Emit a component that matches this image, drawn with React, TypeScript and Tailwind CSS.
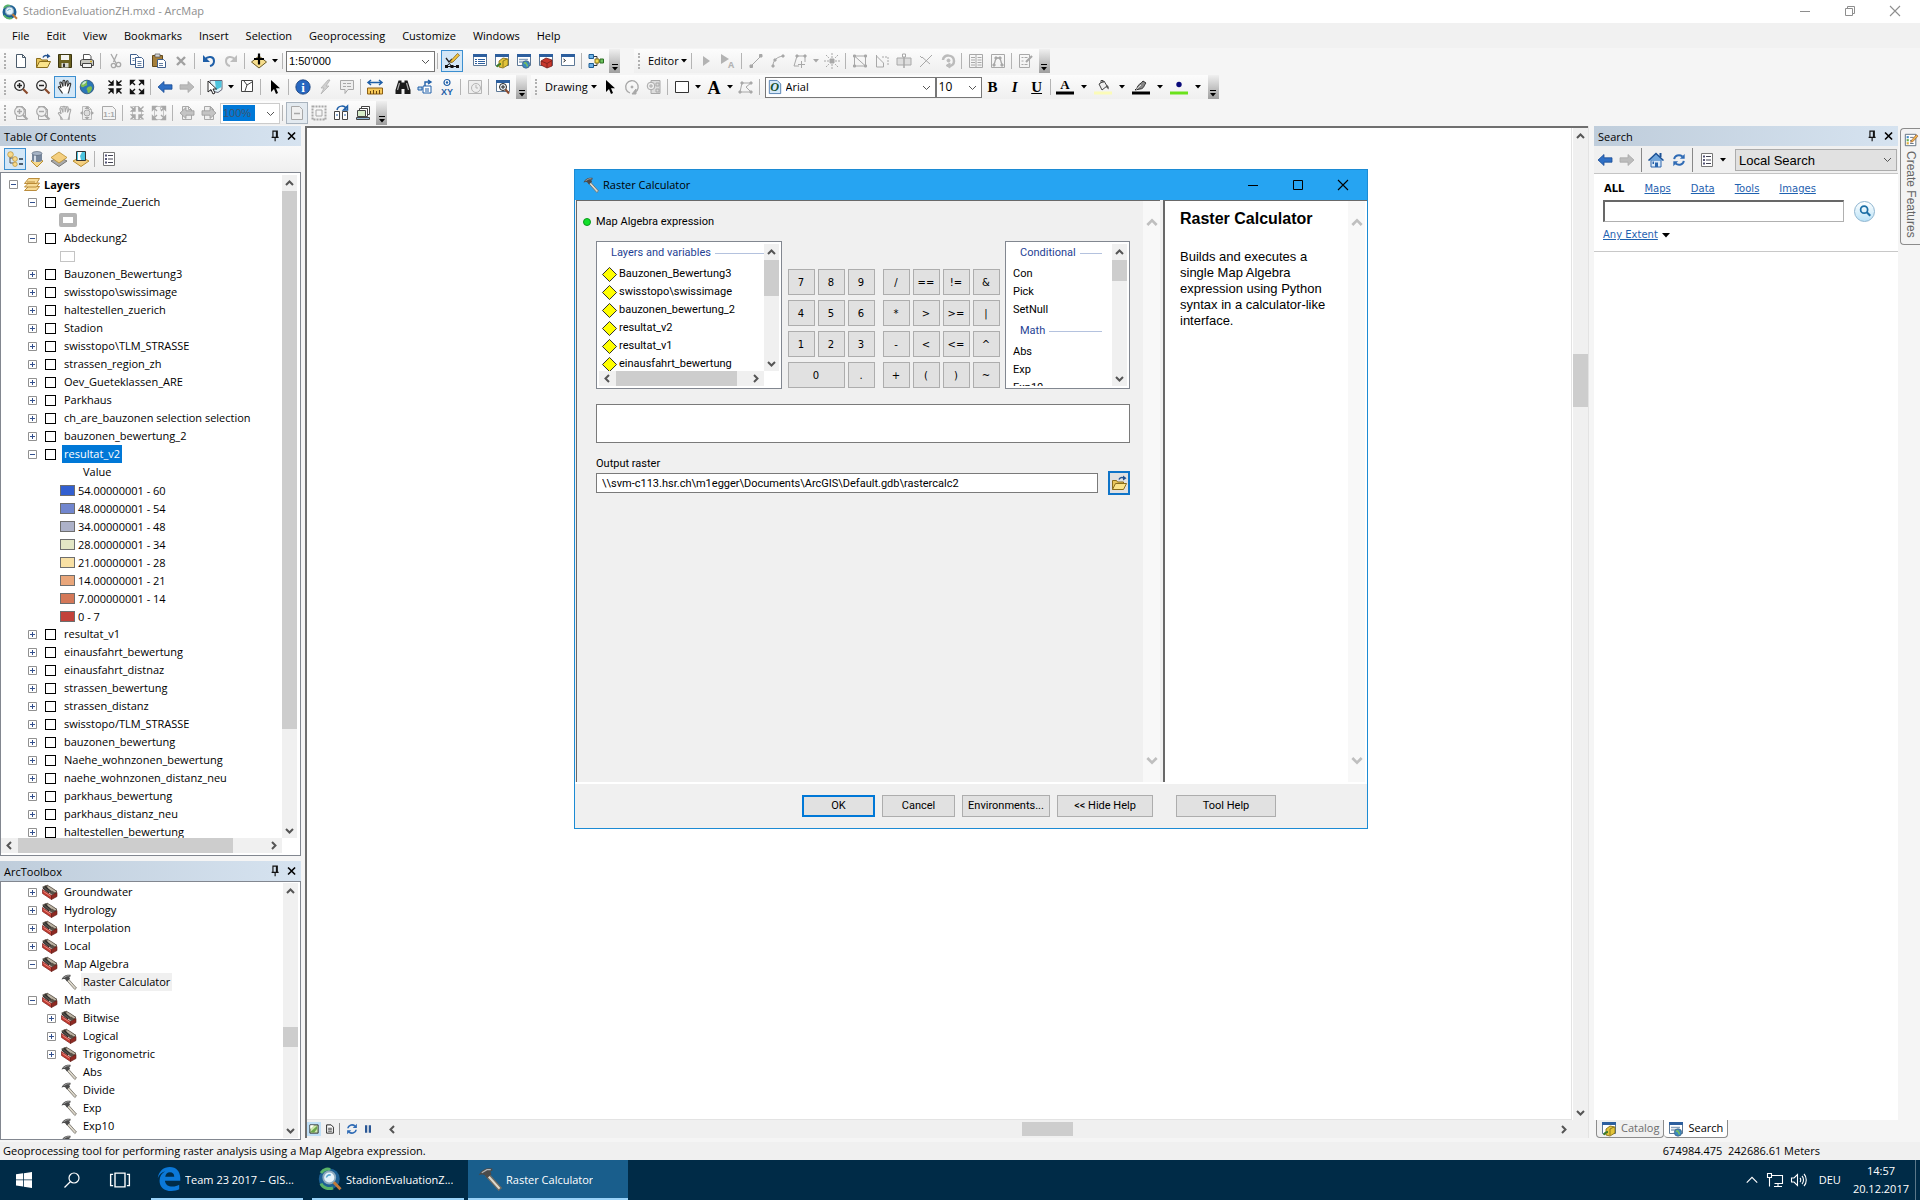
import { useState, type ReactNode } from "react";
import clsx from "clsx";

/* ---------- icons (16x16 grid) ---------- */

const G = "#a8a8a8";

const page = (c: string, f = "#fff") => <path d="M3.5 1.5h6l3 3v10h-9zM9.5 1.5v3h3" fill={f} stroke={c} />;
const corners = (out: boolean, c: string) => (
  <g stroke={c} fill={c} strokeWidth="1.4">
    {out ? (
      <path d="M6 6 3 3M10 6l3-3M6 10l-3 3M10 10l3 3M1.5 5V1.5H5zM14.500 5V1.500H11zM1.500 11v3.500H5zM14.500 11v3.500H11z" />
    ) : (
      <path d="M1.500 1.500l3 3M14.500 1.500l-3 3M1.500 14.500l3-3M14.500 14.500l-3-3M6 2.500V6H2.500zM10 2.500V6h3.500zM6 13.500V10H2.500zM10 13.500V10h3.500z" />
    )}
  </g>
);
const hand = (c: string, f: string) => (
  <path
    d="M5.500 14.500 C4.500 12.500 2.500 10.500 1.300 8.300 C1.500 7 3 7.300 4.200 9 L2.800 3.800 C3 2.600 4.200 2.800 4.600 3.800 L6 7.500 L6 2 C6.300 1 7.600 1 7.800 2 L8.200 7 L9.500 2.300 C10 1.400 11.200 1.800 11.100 2.800 L10.400 7.500 L12.300 4.500 C13 3.800 14 4.400 13.700 5.300 L12.500 9.500 C12.300 11.500 11.800 13 11 14.500"
    fill={f}
    stroke={c}
    strokeWidth="1.100"
  />
);
const lens = (sign: string, c: string, f: string, h: string) => (
  <g fill="none">
    <circle cx="6.500" cy="6.500" r="4.800" fill={f} stroke={c} strokeWidth="1.200" />
    <path d={sign} stroke={c} strokeWidth="1.500" />
    <path d="M10 10l4.500 4.500" stroke={h} strokeWidth="2.200" />
  </g>
);
const arrow = (left: boolean, c: string, f: string) => (
  <path d={left ? "M1 8l6-5.500v3.300h8v4.400H7v3.300z" : "M15 8L9 2.500v3.300H1v4.400h8v3.300z"} fill={f} stroke={c} strokeWidth=".8" />
);
const pointer = (c: string) => <path d="M4 1v12l3-3 2 5 2-1-2-4.800h4z" fill={c} />;
const win = (extra: ReactNode) => (
  <g>
    <path d="M1.500 1.500h13v11h-13z" fill="#fff" stroke="#5d7896" />
    <path d="M1 1h14v3H1z" fill="#2d5f9e" />
    {extra}
  </g>
);
const globe = (
  <g>
    <circle cx="8" cy="8" r="6.800" fill="#2a76b8" stroke="#2a4f76" strokeWidth=".8" />
    <path d="M3 4c2-2 4-2.500 5-2 1 1-1 2 0 3s-1 2-2 2-1 2-3 1-1.500-2 0-4zM9 8c2-1 4-1 4 1s-2 5-4 5c-1-1 0-2-1-3s0-2 1-3z" fill="#7fbf4f" />
    <path d="M4 3.500c2-2 4-1.500 3 0s-3 2.500-4 2z" fill="#d9f0ff" opacity=".8" />
  </g>
);
const arcmap = (
  <g>
    <circle cx="7.500" cy="8" r="7" fill="#1c5f93" />
    <path d="M2 4c2-3 5-3 6-2M2 11c1 3 5 4 8 3" stroke="#58b368" strokeWidth="2" fill="none" />
    <circle cx="7.500" cy="7" r="4" fill="#e4f3fb" stroke="#8ba9bd" strokeWidth="1.200" />
    <path d="M5.500 7c1-2 2-2 3-1.500" stroke="#5aa7d0" fill="none" />
    <path d="M10.500 10.200l4.500 4.600" stroke="#c27a3a" strokeWidth="2" />
  </g>
);
const hammer = (
  <g>
    <path d="M7 4.500l8.500 9.500-1.700 1.500L5.300 6z" fill="#ddd8cb" stroke="#6d6a62" strokeWidth=".8" />
    <path d="M.5 5.500C1.500 3 4 1.200 6.500.8h2.900l.3 1.500L8.300 3l.7 1.800L6 7.500 4.400 5.400C3 4.800 1.800 4.900.5 5.500z" fill="#4b4b4b" />
    <path d="M2.500 3.800l3.500-2h2.500" stroke="#b5b5b5" fill="none" strokeWidth=".8" />
  </g>
);
const toolset = (
  <g>
    <path d="M0 3l4-2 11 6-1 3-4 1z" fill="#5a5248" />
    <path d="M5 1l5 3 5 3.500-2 1.500-3-2-2 1-3-3z" fill="#bdb4a4" stroke="#4a4036" strokeWidth=".7" />
    <path d="M1 4l6 5M3 2.500l6 5" stroke="#2b2b2b" strokeWidth="1.100" />
    <path d="M.5 5.500l9 6v4l-9-6z" fill="#c33b30" stroke="#7a201b" strokeWidth=".7" />
    <path d="M9.500 11.500l5.500-3v4l-5.500 3z" fill="#8f2a23" stroke="#5c1713" strokeWidth=".6" />
    <path d="M1.500 7.500l7 4.600" stroke="#ef9c92" strokeWidth=".8" />
  </g>
);
const folder = (
  <g>
    <path d="M1.500 14.500v-9h4l1 1.500h6v2" fill="#e9c65b" stroke="#8a6d1c" />
    <path d="M1.500 14.500l3-6h11l-3 6z" fill="#fbe48b" stroke="#8a6d1c" />
    <path d="M8 4.500C9 2.500 11 2 12.500 3" stroke="#20508f" strokeWidth="1.500" fill="none" />
    <path d="M12 .5l3.500 2.700L12 5.500z" fill="#20508f" />
  </g>
);
const listOpts = (
  <g>
    <path d="M2.500 1.500h11v13h-11z" fill="#fff" stroke="#777" />
    <path d="M7 4.500h5M7 8h5M7 11.500h5" stroke="#445" strokeWidth="1.200" />
    <path d="M4 3.500h2v2H4zM4 7h2v2H4zM4 10.500h2v2H4z" fill="#557" />
  </g>
);
const pin = <path d="M3 9.500h8M4.500 9.500v-7h5v7M8.500 3v6M7 9.500V14" stroke="#111" strokeWidth="1.300" fill="none" />;
const cross = <path d="M3.500 4l8 8M11.500 4l-8 8" stroke="#000" strokeWidth="1.900" />;
const catalogWin = win(
  <g>
    <path d="M5 8l4-3 5 1v6l-5 3-4-1z" fill="#e2c43a" stroke="#7b6410" strokeWidth=".8" />
    <path d="M9 8l4-2M9 8v6" stroke="#7b6410" strokeWidth=".8" />
    <path d="M3 14c1-3 3-3 4-3" stroke="#3f7d2a" strokeWidth="2" fill="none" />
  </g>
);
const searchWin = win(
  <g>
    <path d="M3 6.500h9M3 9h5" stroke="#8aa2bd" strokeWidth="1.500" />
    <circle cx="10" cy="11.500" r="3.700" fill="#3b87bf" stroke="#40607c" strokeWidth=".7" />
    <path d="M8 10.500c1-1 2-1 2 0s2 1 1 3" stroke="#79c258" strokeWidth="1.500" fill="none" />
  </g>
);

const icons: Record<string, ReactNode> = {
  arcmap, globe, hammer, toolset, folder, pin, cross, listOpts, catalogWin, searchWin,
  new: page("#4a5a6a"),
  save: <g><path d="M1.500 1.500h13v13h-13z" fill="#6c6220" stroke="#3b3510" /><path d="M4 2h8v5H4z" fill="#f4f4f0" /><path d="M4.500 10h7v4.500h-7z" fill="#d9d9d0" /><path d="M6 10.500h2v3.500H6z" fill="#333" /></g>,
  print: <g><path d="M4.500 7V1.500h6l1.500 2V7" fill="#fff" stroke="#555" /><path d="M1.500 7.500l2-1h9l2 1v5h-13z" fill="#c9c9c2" stroke="#444" /><path d="M3.500 10.500h9v4h-9z" fill="#f4f4f4" stroke="#444" /><path d="M11 8.500h2" stroke="#caa72b" strokeWidth="1.500" /></g>,
  cut: <g fill="none" stroke={G} strokeWidth="1.300"><path d="M4 1l5 9M10 1L6.500 9" /><circle cx="11.500" cy="11.500" r="2.200" /><circle cx="6.500" cy="12.500" r="2.200" /></g>,
  copy: <g fill="#fff" stroke="#3f5f8c"><path d="M1.500 1.500h6l2 2v8h-8z" /><path d="M6.500 4.500h6l2 2v8h-8z" /><path d="M8.500 8.500h4M8.500 10.500h4M8.500 12.500h4M3.500 5.500h2M3.500 7.500h2" strokeWidth=".8" /></g>,
  paste: <g><path d="M1.500 2.500h10v11h-10z" fill="#a57f3a" stroke="#634a1c" /><path d="M4 1h5v3H4z" fill="#d8d8d8" stroke="#555" strokeWidth=".7" /><path d="M6.500 6.500h6l2 2v6h-8z" fill="#fff" stroke="#3f5f8c" /><path d="M8 10.500h4M8 12.500h4" stroke="#3f5f8c" strokeWidth=".8" /></g>,
  del: <path d="M4 4l8 8M12 4l-8 8" stroke="#a0a0a0" strokeWidth="2.400" />,
  undo: <g><path d="M4 6.500c3-4 9-3 9 1.500 0 3-2 4.500-4 5" fill="none" stroke="#1f5fa8" strokeWidth="2" /><path d="M2 2v7h7z" fill="#1f5fa8" /></g>,
  redo: <g><path d="M12 6.500C9 2.500 3 3.500 3 8c0 3 2 4.500 4 5" fill="none" stroke="#bdbdbd" strokeWidth="2" /><path d="M14 2v7H7z" fill="#bdbdbd" /></g>,
  addData: <g><path d="M8 3l7.500 6L8 15 .5 9z" fill="#f6dd8c" stroke="#6b5a22" /><path d="M8 .500v11M3 6h10" stroke="#000" strokeWidth="2.200" /></g>,
  editSketch: <g><path d="M2 5l3 4 3-3" stroke="#222" fill="none" strokeWidth="1.300" /><path d="M7 7.500L13.500 .500l2 1.700L9 9l-2.500.800z" fill="#f5c63d" stroke="#6d5010" strokeWidth=".7" /><path d="M2.500 13.500h11M2.500 13l3-2.500 2 3" stroke="#111" fill="none" /><path d="M1 12h3v3H1zM6.500 12h3v3h-3zM12 12h3v3h-3z" fill="#111" /></g>,
  tocWin: win(<path d="M3 6.500h2M6 6.500h7M3 8.500h2M6 8.500h7M3 10.500h2M6 10.500h7" stroke="#2d5f9e" strokeWidth="1.200" />),
  toolboxWin: win(<g><path d="M3 8l5-3 6 2v6l-5 2-6-3z" fill="#c8372c" stroke="#73201a" strokeWidth=".8" /><path d="M3 8l6 2.500V15M9 10.500l5-3" stroke="#73201a" fill="none" strokeWidth=".8" /></g>),
  pyWin: win(<path d="M3.500 6l2 1.500-2 1.500" stroke="#222" fill="none" />),
  model: <g><path d="M4 3.500h5v9H4M9 8h3" stroke="#333" fill="none" /><path d="M1 1.500h4.500v4H1zM1 10.500h4.500v4H1z" fill="#6fb2e6" stroke="#1d5d93" /><path d="M7 6h4v4H7z" fill="#f4dd57" stroke="#8a7414" /><path d="M12 6h3.500v4H12z" fill="#6cc25e" stroke="#2c6e23" /></g>,
  edArrow: <path d="M5 3v10l7-5z" fill="#b3b3b3" />,
  edArrowA: <g fill="#b3b3b3"><path d="M1 1v10l8-5z" /><text x="8" y="15" fontSize="9" fontWeight="bold">A</text></g>,
  edLine: <g stroke={G} fill={G}><path d="M3 13L13 3" /><path d="M2 12h2.500v2.500H2zM11.500 1.500H14V4h-2.500z" /></g>,
  edArc: <g stroke={G} fill="none"><path d="M3 13c0-6 4-9 10-10" /><path d="M2 12h2v2H2zM4 6h2v2H4zM12 2h2v2h-2z" fill={G} /></g>,
  edTrace: <g stroke={G} fill="none"><path d="M2 13L5 3h8v6M2 13h5M9.500 8v7M6 11.500h7" /><path d="M4 2h2v2H4zM12 2h2v2h-2z" fill={G} /></g>,
  edPoint: <g stroke={G} fill="none"><path d="M8 0v5M8 11v5M0 8h5M11 8h5M2 2l3 3M14 2l-3 3M2 14l3-3M14 14l-3-3" strokeDasharray="2 1" /><path d="M6 6h4v4H6z" fill={G} /></g>,
  edVert: <g stroke={G} fill="none"><path d="M2.500 3h11v10h-11zM2.500 3l11 10" /><path d="M1.500 2h2v2h-2zM12.500 2h2v2h-2zM12.500 12h2v2h-2zM1.500 12h2v2h-2z" fill={G} /></g>,
  edReshape: <g stroke={G} fill="none"><path d="M2.500 2v12M2.500 3l7 7v4h-7" /><path d="M8 4h6v9" strokeDasharray="2 1" /></g>,
  edCut: <g stroke={G} fill="none"><path d="M1 5h14v7H1z" fill="#dedede" /><path d="M8 1v14" strokeWidth="1.500" /><path d="M6.500 1h3v3h-3z" fill="#fff" /></g>,
  edSplit: <g stroke={G} fill="none"><path d="M2 14L14 2M4 4l8 7" /><path d="M2 3l2 2" /></g>,
  edRotate: <g stroke="#bbb" fill="none"><path d="M3 7c0-6 11-6 11 1 0 3-2 5-5 5" strokeWidth="2.500" /><circle cx="8.500" cy="7.500" r="1.500" fill="#bbb" /><path d="M10 10v5l-4-2.500z" fill="#bbb" /></g>,
  edTable: <g stroke={G} fill="none"><path d="M1.500 1.500h13v13h-13zM8 2v12M3 4.500h4M3 7h4M3 9.500h4M3 12h4M9.500 4.500h4M9.500 7h4M9.500 9.500h4M9.500 12h4" /></g>,
  edSketchProp: <g stroke={G} fill="none"><path d="M1.500 1.500h13v13h-13z" /><path d="M4 12l2-7h4l2 7" strokeWidth="1.300" /><path d="M3 11h2v2H3zM5 4h2v2H5zM9 4h2v2H9zM11 11h2v2h-2z" fill={G} /></g>,
  edCreate: <g stroke={G} fill="none"><path d="M1.500 1.500h10v13h-10zM3.500 4.500h2M3.500 8h2M3.500 11.500h2M6.500 4.500h3M6.500 11.500h3" /><path d="M8 9l6-6" strokeWidth="2.200" /></g>,
  zoomIn: lens("M4 6.500h5M6.500 4v5", "#222", "#f4f4f4", "#8a4a2c"),
  zoomOut: lens("M4 6.500h5", "#222", "#f4f4f4", "#8a4a2c"),
  pan: hand("#333", "#fff"),
  fixedIn: corners(false, "#111"),
  fixedOut: corners(true, "#111"),
  back: arrow(true, "#1b4d96", "#2f6fc4"),
  fwd: arrow(false, "#a8a8a8", "#bcbcbc"),
  selectFeat: <g><path d="M3 1.500h12v9l-4 3-8-2z" fill="#dff3fa" stroke="#667" /><path d="M8 2h6.500v6L9 11z" fill="#4cc3dd" /><path d="M1 2v11l3-2.500L6 15l2-1-2-4h3.500z" fill="#fff" stroke="#111" strokeWidth=".9" /></g>,
  clearSel: <g fill="#fff" stroke="#444"><path d="M2.500 1.500h11v11h-11z" /><path d="M5 2l3 4 5-3M8 6l-2 6" fill="none" /></g>,
  pointer: pointer("#000"),
  info: <g><circle cx="8" cy="8" r="7.200" fill="#2767c0" stroke="#143c78" strokeWidth=".8" /><text x="8" y="12.500" fontSize="13" fontWeight="bold" fontFamily="Liberation Serif, serif" fill="#fff" textAnchor="middle">i</text></g>,
  bolt: <path d="M11 1L4 9h3l-3 6 8-8H9l4-6z" fill="#d0d0d0" stroke="#b3b3b3" strokeWidth=".8" />,
  popup: <g fill="#eee" stroke={G}><path d="M1.500 1.500h13v9H9l-3 4v-4H1.500z" /><path d="M4 4.500h3M8 4.500h4M4 7.500h3M8 7.500h4" /></g>,
  measure: <g><path d="M1 3.500h14M4 1L1 3.500 4 6M12 1l3 2.500L12 6" stroke="#1f5fa8" strokeWidth="1.500" fill="none" /><path d="M.500 9h15v6h-15z" fill="#f7c95a" stroke="#8c5f14" /><path d="M3.500 12v3M6.500 11v4M9.500 12v3M12.500 11v4" stroke="#6b460c" /></g>,
  binoc: <g><path d="M3.500 1.500h3v2h3v-2h3L15.500 11v4h-6v-5h-3v5h-6v-4z" fill="#1a1a1a" /><path d="M4.500 4L2.500 11M11.500 4l2 7" stroke="#aaa" strokeWidth="1.200" /></g>,
  route: <g stroke="#1f5fa8" fill="none"><path d="M8 9V3h5M11 1l3 2-3 2" strokeWidth="1.400" /><path d="M6 7h8v7H6z" fill="#fff" /><path d="M1 8h4v3H1z" fill="#bcd7ee" /><path d="M8 10h4M8 12h4" /></g>,
  xy: <g fill="#1f5fa8"><circle cx="8" cy="3.500" r="3" fill="#fff" stroke="#1f5fa8" strokeWidth="1.200" /><circle cx="8" cy="3.500" r="1.200" /><text x="8" y="15.500" fontSize="9" fontWeight="bold" fontFamily="Liberation Sans, sans-serif" textAnchor="middle">XY</text></g>,
  time: <g stroke="#b5b5b5" fill="#eee"><path d="M1.500 1.500h13v13h-13z" /><circle cx="9" cy="9" r="4.500" /><path d="M9 6v3h2" fill="none" /></g>,
  viewer: win(<g><circle cx="8" cy="8" r="3.500" fill="#eef4fa" stroke="#222" /><path d="M6 8h4M8 6v4" stroke="#222" /><path d="M10.500 10.500L14 14.500" stroke="#8a4a2c" strokeWidth="2" /></g>),
  rotGray: <g stroke={G} fill="none"><path d="M6 14A6.300 6.300 0 1 1 11 13.500" strokeWidth="1.300" /><circle cx="8" cy="8" r="1" fill={G} /><path d="M12 10v5H8z" fill={G} /></g>,
  zoomSel: <g stroke={G} fill="#ddd"><path d="M5 1.500h9v13H5z" /><circle cx="5" cy="7" r="3.800" fill="#eee" /><path d="M3 7h4M5 5v4M10 4h3v3h-3zM10 10h3v3h-3z" /></g>,
  rect: <path d="M1.500 2.500h13v11h-13z" fill="#fff" stroke="#333" />,
  bigA: <text x="8" y="14.500" fontSize="18" fontWeight="bold" fontFamily="Liberation Serif, serif" textAnchor="middle">A</text>,
  editVert: <g stroke={G} fill="none"><path d="M2 13l2-9h9L8 8l5 5z" /><path d="M1 12h2v2H1zM3 3h2v2H3zM12 3h2v2h-2zM12 12h2v2h-2z" fill={G} /></g>,
  fontA: <g><text x="8" y="10" fontSize="13" fontWeight="bold" fontFamily="Liberation Serif, serif" textAnchor="middle">A</text><path d="M-1 12.500h18v3H-1z" /></g>,
  fill: <g><path d="M4 5l5-3 3 5-5 4z" fill="#eee" stroke="#444" /><path d="M6 4V1.500h2V4" stroke="#444" fill="none" /><path d="M12 6c2 1 2 3 1.500 4.500L11 8z" fill="#555" /><path d="M-1 12.500h18v3H-1z" fill="#fbfbb8" /></g>,
  line: <g><path d="M4 9c1-4 4-4 6-7l3 2c-2 2-2 6-6 6l-5 1z" fill="#888" stroke="#222" strokeWidth=".9" /><path d="M3 10.500L8 6" stroke="#fff" strokeWidth=".8" /><path d="M-1 12.500h18v3H-1z" /></g>,
  marker: <g><circle cx="8" cy="5.500" r="2.700" fill="#0a0a7a" /><path d="M-1 12.500h18v3H-1z" fill="#6be21c" /></g>,
  pgIn: <g>{page(G, "#f4f4f4")}{lens("M4 6.500h5M6.500 4v5", G, "#f0f0f0", G)}</g>,
  pgOut: <g>{page(G, "#f4f4f4")}{lens("M4 6.500h5", G, "#f0f0f0", G)}</g>,
  pgPan: <g>{page("#bbb", "#f4f4f4")}{hand(G, "#f4f4f4")}</g>,
  pgFull: <g>{page("#bbb", "#eee")}<path d="M8 1l2.500 3h-5zM8 15l2.500-3h-5zM1 8l3-2.500v5zM15 8l-3-2.500v5z" fill={G} /><circle cx="8" cy="8" r="3" fill="#ddd" stroke={G} /></g>,
  pgOne: <g><path d="M1.500 1.500h10l3 3v10h-13z" fill="#f4f4f4" stroke={G} /><text x="8" y="12" fontSize="8" fontWeight="bold" fill={G} textAnchor="middle" fontFamily="Liberation Sans, sans-serif">1:1</text></g>,
  pgFixIn: <g>{page("#c4c4c4", "#f4f4f4")}{corners(false, G)}</g>,
  pgFixOut: <g>{page("#c4c4c4", "#f4f4f4")}{corners(true, G)}</g>,
  pgBack: <g>{page(G, "#eee")}{arrow(true, "#999", "#c4c4c4")}</g>,
  pgFwd: <g>{page(G, "#eee")}{arrow(false, "#999", "#c4c4c4")}</g>,
  draft: <g><path d="M2.500 1.500h8l3 3v10h-11z" fill="#f0f0f0" stroke={G} /><path d="M5 8.500h6" stroke={G} strokeWidth="1.500" /></g>,
  focus: <g fill="none" stroke={G}><path d="M1.500 1.500h13v13h-13z" strokeDasharray="2 1" strokeWidth="2" /><path d="M5 5h6v6H5z" /></g>,
  layoutSwap: <g><path d="M1.500 6.500h5v8h-5zM9.500 6.500h5v8h-5z" fill="#fff" stroke="#444" /><path d="M4 5c1-5 8-5 9-1M14.500 1v4h-4z" fill="none" stroke="#1f5fa8" strokeWidth="1.500" /><path d="M3 10h2M11 10h2" stroke="#1f5fa8" /></g>,
  dataDriven: <g fill="#fff" stroke="#444"><path d="M6.500 1.500h8v8h-8z" /><path d="M4.500 3.500h8v8h-8z" /><path d="M2.500 5.500h8v6h-8z" fill="#d6ecc8" /><path d="M1.500 12.500h13v2h-13z" fill="#8fb7d8" /></g>,
  byDrawing: <g><path d="M3 4v8h5M3 7h5" stroke="#555" fill="none" /><circle cx="3.500" cy="3.500" r="2.800" fill="#f7d88a" stroke="#b98f30" strokeWidth=".7" /><circle cx="8" cy="8" r="2.400" fill="#f7d88a" stroke="#b98f30" strokeWidth=".7" /><circle cx="8" cy="13.300" r="2.200" fill="#f7d88a" stroke="#b98f30" strokeWidth=".7" /><path d="M12 8h4M12 13h4" stroke="#234" strokeWidth="1.500" /></g>,
  bySource: <g><path d="M2 10l6-3 6 3-6 6z" fill="#f7d88a" stroke="#b98f30" /><path d="M3 2.500v7c1 2 9 2 10 0v-7z" fill="#76869c" /><path d="M5 3v8h2V3z" fill="#d5dde8" /><ellipse cx="8" cy="2.500" rx="5" ry="2" fill="#a7b4c6" stroke="#4c5a6d" strokeWidth=".6" /></g>,
  byVis: <g><path d="M0 10l8-4 8 4-8 5.500z" fill="#aaa" stroke="#777" /><path d="M0 6.500L8 1l8 5.500L8 12z" fill="#f4cf80" stroke="#b98f30" strokeWidth=".8" /></g>,
  bySel: <g><path d="M0 10l8-4 8 4-8 5.500z" fill="#f4cf80" stroke="#b98f30" /><path d="M3.500.500h9v9h-9z" fill="#4cc3dd" stroke="#333" /><path d="M5 1h4L7 5l1 4H5z" fill="#fff" /></g>,
  layers: <g fill="#f8dc98" stroke="#b3822c" strokeWidth=".9"><path d="M.500 14.500l4-4h11l-3 4z" /><path d="M.500 11l4-4h11l-3 4z" /><path d="M.500 7.500l4-5h11l-3 5z" /><path d="M3 6h8" /></g>,
  home: <g><path d="M3 8h10v7H3z" fill="#dbe9f7" stroke="#2a65ad" /><path d="M.500 8.500L8 1.500l7.500 7" fill="#6ea5dc" stroke="#1d5296" strokeWidth="1.500" /><path d="M11.500 1h2v4h-2z" fill="#1d5296" /><path d="M7 10.500h3V15H7zM4.500 9.500h1.500V12H4.500z" fill="#2a65ad" /></g>,
  refresh: <g fill="none" stroke="#2f6bb5" strokeWidth="2.200"><path d="M2.500 7C3 3 8 1 12 4M13.500 9C13 13 8 15 4 12" /><path d="M14.500 1v5.500H9zM1.500 15V9.500H7z" fill="#2f6bb5" stroke="none" /></g>,
  mapView: <g><path d="M2.500 2.500h11v11h-11z" fill="#cfe8b0" stroke="#222" strokeWidth="1.200" /><path d="M3 12L12 4v4l-4 5z" fill="#6aa54b" /><path d="M3 3h5L3 8z" fill="#fff" /></g>,
  layoutView: <g fill="#fff" stroke="#222" strokeWidth="1.300"><path d="M3.500 2.500h6l3 3v8h-9z" /><path d="M5.500 7h5M5.500 9h5M5.500 11h5" strokeWidth="1" /></g>,
  pause: <path d="M4 3h3v10H4zM9 3h3v10H9z" fill="#2a5795" />,
  create: <g><path d="M1.500 1.500h12v13h-12z" fill="#fff" stroke="#567" /><path d="M3 3.500h2.500V6H3z" fill="#4a90c8" /><path d="M3 7h2.500v2.500H3z" fill="#6ab04c" /><path d="M3 10.500h2.500V13H3z" fill="#e0b040" /><path d="M7 5h4M7 8.500h4M7 12h4" stroke="#567" /><path d="M8 9l6-7 2 1.500-6 6.500-2.500.500z" fill="#f3b94a" stroke="#8a4a2c" strokeWidth=".7" /></g>,
  min: <path d="M3 8.500h10" stroke="currentColor" />,
  max: <path d="M3.500 3.500h9v9h-9z" fill="none" stroke="currentColor" />,
  restore: <path d="M3.500 5.500h7v7h-7zM5.500 5V3.500h7v7H11" fill="none" stroke="currentColor" />,
  close: <path d="M3 3l10 10M13 3L3 13" fill="none" stroke="currentColor" strokeWidth="1.100" />,
  windows: <path d="M0 2.300l7-1v6.200H0zM7.800 1.200L16 0v7.500H7.800zM0 8.300h7v6.200l-7-1zM7.800 8.300H16V16l-8.200-1.200z" fill="#fff" />,
  find: <g fill="none" stroke="#fff" strokeWidth="1.200"><circle cx="10" cy="6" r="5" /><path d="M6.500 9.500L.500 15.500" /></g>,
  taskview: <path d="M4 2.500h8v11H4zM2.500 3.500h-2v9h2M13.500 3.500h2v9h-2" fill="none" stroke="#fff" strokeWidth="1.100" />,
  edge: <path d="M.500 7.500C1.300 2.500 4.500 0 8.500 0c4.500 0 7 3.300 7 7.200v1.900H5.300c.2 2.600 2.200 3.900 5 3.900 1.800 0 3.200-.4 4.500-1.200v3.100c-1.400.8-3.200 1.100-5.200 1.100-5 0-7.900-2.800-7.900-6.900 0-2.700 1.400-5 3.800-6.200C3 3.700 1.500 5.200.500 7.500zm5-1h6c0-1.900-1-3-2.900-3-1.800 0-2.900 1.200-3.100 3z" fill="#0b78d8" fillRule="evenodd" />,
  net: <g fill="none" stroke="#fff" strokeWidth="1.100"><path d="M4.500 3.500h11v8h-8M11 11.500v3M7 14.500h8" /><path d="M.500 1.500h4v4h-4zM2.500 5.500v9" /></g>,
  sound: <g fill="none" stroke="#fff" strokeWidth="1.100"><path d="M.500 6h2.500l3.500-3.500v11L3 10H.500z" /><path d="M9 6c1 1 1 3 0 4M11 4c2 2 2 6 0 8M13 2c3 3 3 9 0 12" /></g>,
  tray: <path d="M2 11l6-6 6 6" fill="none" stroke="#fff" strokeWidth="1.300" />,
  magnify: <g fill="none" stroke="#1b6ea5"><circle cx="7" cy="6.500" r="4" strokeWidth="2" /><path d="M10 9.500l4 4" strokeWidth="2.400" /></g>,
  fontO: <g><path d="M1.500.500h9l4 4v11h-13z" fill="#d6e8f8" stroke="#4a78ad" /><text x="7.500" y="13" fontSize="14" fontWeight="bold" fontStyle="italic" fontFamily="Liberation Serif, serif" textAnchor="middle" fill="#14502c">O</text></g>,
  diamond: <path d="M8 .500L15.500 8 8 15.500.500 8z" fill="#ffff00" stroke="#222" />,
};

function Icon({ name, className = "size-4" }: { name: string; className?: string }) {
  return (
    <svg viewBox="0 0 16 16" className={clsx("block shrink-0 overflow-visible", className)} aria-hidden="true">
      {icons[name]}
    </svg>
  );
}

/* ---------- small controls ---------- */

function Tool({ name, on, faded }: { name: string; on?: boolean; faded?: boolean }) {
  return (
    <button
      aria-label={name}
      className={clsx(
        "flex size-[22px] shrink-0 items-center justify-center",
        on && !faded && "border border-[#3c8fd0] bg-[#d3e7f7]",
        on && faded && "border border-[#a9b4bf] bg-[#e3eaf0]"
      )}
    >
      <Icon name={name} />
    </button>
  );
}

const Sep = () => <span className="mx-[2px] h-4 w-0.5 shrink-0 border-l border-[#b4b4b4]" />;
const Gap = () => <span className="w-1.5 shrink-0" />;

function Drop({ wide, gray }: { wide?: boolean; gray?: boolean }) {
  return (
    <button aria-label="More" className={clsx("flex shrink-0 items-center justify-center", wide ? "w-4" : "w-2.5")}>
      <svg viewBox="0 0 6 4" className="h-[4px] w-[6px]">
        <path d="M0 0h6L3 3.500z" fill={gray ? "#a8a8a8" : "#000"} />
      </svg>
    </button>
  );
}

function Strip({ children }: { children: ReactNode }) {
  return (
    <div className="flex h-6 shrink-0 items-center bg-gradient-to-b from-[#fcfcfc] to-[#efefef]">
      <span className="mx-1 h-4 w-0.5 shrink-0 border-l-2 border-dotted border-[#b0b0b0]" />
      {children}
      <button
        aria-label="Toolbar options"
        className="ml-0.5 flex h-6 w-[11px] shrink-0 flex-col items-center justify-end gap-0.5 bg-gradient-to-b from-[#f0f0f0] to-[#9f9f9f] pb-0.5"
      >
        <span className="h-px w-1.5 bg-black" />
        <svg viewBox="0 0 6 4" className="h-[4px] w-[6px]">
          <path d="M0 0h6L3 3.500z" />
        </svg>
      </button>
    </div>
  );
}

// "|" in the list is a separator
const tools = (names: string) => names.split(" ").map((n, i) => (n === "|" ? <Sep key={i} /> : <Tool key={i} name={n} />));

type Dir = "up" | "down" | "left" | "right";
const chevrons: Record<Dir, string> = {
  up: "M1 6l3.500-3.500L8 6",
  down: "M1 3l3.500 3.500L8 3",
  left: "M6 1L2.500 4.500 6 8",
  right: "M3 1l3.500 3.500L3 8",
};

function Chevron({ dir, light, thin }: { dir: Dir; light?: boolean; thin?: boolean }) {
  return (
    <svg viewBox="0 0 9 9" className={clsx("shrink-0", light ? "size-3" : "size-[9px]")}>
      <path d={chevrons[dir]} fill="none" stroke={light ? "#bfbfbf" : "#555"} strokeWidth={thin ? 1 : 2} />
    </svg>
  );
}

function VScroll({ before, thumb, light }: { before?: string; thumb?: string; light?: boolean }) {
  return (
    <div className={clsx("flex shrink-0 flex-col items-center", light ? "w-[17px] bg-[#f8f8f8]" : "w-[15px] bg-[#f0f0f0]")}>
      <span className={clsx("flex shrink-0 items-center", light ? "h-11" : "h-4")}>
        <Chevron dir="up" light={light} />
      </span>
      {before && <span className={clsx("shrink-0", before)} />}
      {thumb && <span className={clsx("w-full shrink-0 bg-[#cdcdcd]", thumb)} />}
      <span className="flex-1" />
      <span className={clsx("flex shrink-0 items-center", light ? "h-11" : "h-4")}>
        <Chevron dir="down" light={light} />
      </span>
    </div>
  );
}

function HScroll({ thumb, end }: { thumb: string; end: string }) {
  return (
    <div className={clsx("flex h-[15px] shrink-0 items-center bg-[#f0f0f0]", end)}>
      <span className="flex w-[17px] shrink-0 justify-center">
        <Chevron dir="left" />
      </span>
      <span className={clsx("h-full bg-[#cdcdcd]", thumb)} />
      <span className="flex-1" />
      <span className="flex w-[17px] shrink-0 justify-center">
        <Chevron dir="right" />
      </span>
    </div>
  );
}

function Combo({ label, value, box, select, children }: { label: string; value: string; box: string; select: string; children?: ReactNode }) {
  return (
    <label className={clsx("relative flex shrink-0 items-center", box)}>
      {children}
      <select aria-label={label} className={clsx("min-w-0 flex-1 appearance-none outline-none", select)}>
        <option>{value}</option>
      </select>
      <span className="pointer-events-none absolute right-1">
        <Chevron dir="down" thin />
      </span>
    </label>
  );
}

function PanelHeader({ title }: { title: string }) {
  return (
    <div className="flex h-5 shrink-0 items-center bg-gradient-to-r from-[#bfcddb] to-[#d6e3f0] pl-1">
      <h2 className="flex-1 pt-0.5">{title}</h2>
      <button aria-label="Pin" className="mr-0.5">
        <Icon name="pin" className="size-3.5" />
      </button>
      <button aria-label="Close" className="mr-0.5">
        <Icon name="cross" className="size-3.5" />
      </button>
    </div>
  );
}

function Expander({ open }: { open?: boolean }) {
  return (
    <button aria-label={open ? "Collapse" : "Expand"} className="size-[9px] shrink-0">
      <svg viewBox="0 0 9 9" className="block size-[9px]">
        <path d="M.5.5h8v8h-8z" fill="#fff" stroke="#919191" />
        <path d={open ? "M2 4.500h5" : "M2 4.500h5M4.500 2v5"} stroke="#32508f" />
      </svg>
    </button>
  );
}

/* ---------- data ---------- */

const menus = ["File", "Edit", "View", "Bookmarks", "Insert", "Selection", "Geoprocessing", "Customize", "Windows", "Help"];

type Layer = { name: string; open?: boolean; symbol?: "thick" | "thin"; legend?: boolean };

const layers: Layer[] = [
  { name: "Gemeinde_Zuerich", open: true, symbol: "thick" },
  { name: "Abdeckung2", open: true, symbol: "thin" },
  { name: "Bauzonen_Bewertung3" },
  { name: "swisstopo\\swissimage" },
  { name: "haltestellen_zuerich" },
  { name: "Stadion" },
  { name: "swisstopo\\TLM_STRASSE" },
  { name: "strassen_region_zh" },
  { name: "Oev_Gueteklassen_ARE" },
  { name: "Parkhaus" },
  { name: "ch_are_bauzonen selection selection" },
  { name: "bauzonen_bewertung_2" },
  { name: "resultat_v2", open: true, legend: true },
  { name: "resultat_v1" },
  { name: "einausfahrt_bewertung" },
  { name: "einausfahrt_distnaz" },
  { name: "strassen_bewertung" },
  { name: "strassen_distanz" },
  { name: "swisstopo/TLM_STRASSE" },
  { name: "bauzonen_bewertung" },
  { name: "Naehe_wohnzonen_bewertung" },
  { name: "naehe_wohnzonen_distanz_neu" },
  { name: "parkhaus_bewertung" },
  { name: "parkhaus_distanz_neu" },
  { name: "haltestellen_bewertung" },
];

const classes = [
  { label: "54.00000001 - 60", color: "bg-[#325fd0]" },
  { label: "48.00000001 - 54", color: "bg-[#7186ce]" },
  { label: "34.00000001 - 48", color: "bg-[#adb2c9]" },
  { label: "28.00000001 - 34", color: "bg-[#e3e6c5]" },
  { label: "21.00000001 - 28", color: "bg-[#f8e0a4]" },
  { label: "14.00000001 - 21", color: "bg-[#e9a67a]" },
  { label: "7.000000001 - 14", color: "bg-[#d47858]" },
  { label: "0 - 7", color: "bg-[#c3423a]" },
];

type ToolNode = { name: string; kind: "set" | "tool"; deep?: boolean; open?: boolean; selected?: boolean };

const toolbox: ToolNode[] = [
  { name: "Groundwater", kind: "set" },
  { name: "Hydrology", kind: "set" },
  { name: "Interpolation", kind: "set" },
  { name: "Local", kind: "set" },
  { name: "Map Algebra", kind: "set", open: true },
  { name: "Raster Calculator", kind: "tool", selected: true },
  { name: "Math", kind: "set", open: true },
  { name: "Bitwise", kind: "set", deep: true },
  { name: "Logical", kind: "set", deep: true },
  { name: "Trigonometric", kind: "set", deep: true },
  { name: "Abs", kind: "tool" },
  { name: "Divide", kind: "tool" },
  { name: "Exp", kind: "tool" },
  { name: "Exp10", kind: "tool" },
];

const variables = ["Bauzonen_Bewertung3", "swisstopo\\swissimage", "bauzonen_bewertung_2", "resultat_v2", "resultat_v1", "einausfahrt_bewertung"];
const digits = ["7", "8", "9", "4", "5", "6", "1", "2", "3", "0", "."];
const operators = ["/", "==", "!=", "&", "*", ">", ">=", "|", "-", "<", "<=", "^", "+", "(", ")", "~"];

/* ---------- toolbars ---------- */

function Toolbars() {
  return (
    <div className="shrink-0">
      <div className="flex h-[26px] items-center gap-3.5">
        <Strip>
          {tools("new folder save print | cut copy paste del | undo redo | addData")}
          <Drop />
          <Sep />
          <Combo label="Map scale" value="1:50'000" box="h-[21px] w-[149px] border border-[#777] bg-white" select="pl-0.5 font-['Liberation_Sans',sans-serif]" />
          <Sep />
          <Tool name="editSketch" on />
          <Gap />
          {tools("tocWin catalogWin searchWin toolboxWin pyWin | model")}
        </Strip>
        <Strip>
          <button className="pl-1">Editor</button>
          <Drop />
          {tools("| edArrow edArrowA | edLine edArc edTrace")}
          <Drop gray />
          {tools("edPoint | edVert edReshape edCut edSplit edRotate | edTable edSketchProp | edCreate")}
        </Strip>
      </div>
      <div className="flex h-[26px] items-center gap-1">
        <Strip>
          {tools("zoomIn zoomOut")}
          <Tool name="pan" on />
          <Tool name="globe" />
          <Gap />
          {tools("fixedIn fixedOut | back fwd | selectFeat")}
          <Drop />
          {tools("clearSel | pointer | info bolt popup | measure")}
          <Gap />
          {tools("binoc route xy | time | viewer")}
        </Strip>
        <Strip>
          <button className="pr-px pl-1">Drawing</button>
          <Drop />
          {tools("pointer rotGray zoomSel | rect")}
          <Drop />
          <Tool name="bigA" />
          <Drop />
          {tools("editVert |")}
          <Combo label="Font" value="Arial" box="ml-0.5 h-[21px] w-[171px] border border-[#777] bg-white pl-0.5" select="pl-1">
            <Icon name="fontO" className="size-3.5" />
          </Combo>
          <Combo label="Font size" value="10" box="h-[21px] w-[46px] border border-[#777] bg-white" select="pl-0.5 text-[12px]" />
          <button className="w-[22px] font-['Liberation_Serif',serif] text-[15px] font-bold">B</button>
          <button className="w-[22px] font-['Liberation_Serif',serif] text-[15px] font-bold italic">I</button>
          <button className="w-[22px] font-['Liberation_Serif',serif] text-[15px] font-bold underline">U</button>
          <Sep />
          <Tool name="fontA" />
          <Drop wide />
          <Tool name="fill" />
          <Drop wide />
          <Tool name="line" />
          <Drop wide />
          <Tool name="marker" />
          <Drop wide />
        </Strip>
      </div>
      <div className="flex h-[26px] items-center">
        <Strip>
          {tools("pgIn pgOut pgPan pgFull pgOne | pgFixIn pgFixOut | pgBack pgFwd")}
          <Combo label="Zoom" value="100%" box="h-[21px] w-[60px] border border-[#ccc] bg-white pl-0.5" select="mr-6 bg-[#0078d7] font-['Liberation_Sans',sans-serif] text-[#3c5570]" />
          <Sep />
          <Tool name="draft" on faded />
          {tools("focus layoutSwap dataDriven")}
        </Strip>
      </div>
    </div>
  );
}

/* ---------- docked panels ---------- */

function LayerRow({ layer }: { layer: Layer }) {
  const [checked, setChecked] = useState(false);
  return (
    <li>
      <div className="flex h-[18px] items-center pl-[27px]">
        <Expander open={layer.open} />
        <label className="flex items-center">
          <input
            type="checkbox"
            checked={checked}
            onChange={() => setChecked(!checked)}
            className="mr-1.5 ml-2 size-[11px] shrink-0 appearance-none border border-black bg-white checked:bg-black"
          />
          <span className={clsx("h-[18px] px-0.5 leading-[17px] whitespace-nowrap", layer.legend && "bg-[#0078d7] text-white")}>{layer.name}</span>
        </label>
      </div>
      {layer.symbol && (
        <div className="flex h-[18px] items-center pl-[58px]">
          {layer.symbol === "thick" ? (
            <span className="h-3.5 w-[18px] rounded-xs border-4 border-[#b4b4b4]" />
          ) : (
            <span className="ml-px h-[11px] w-[15px] border border-[#c4c4c4]" />
          )}
        </div>
      )}
      {layer.legend && (
        <ul>
          <li className="h-[18px] pl-[82px] leading-[17px]">Value</li>
          {classes.map((c) => (
            <li key={c.label} className="flex h-[18px] items-center pl-[59px]">
              <span className={clsx("mr-[3px] h-[11px] w-[15px] border border-[#6e6e6e]", c.color)} />
              <span className="leading-[17px]">{c.label}</span>
            </li>
          ))}
        </ul>
      )}
    </li>
  );
}

function TableOfContents() {
  return (
    <section className="flex min-h-0 flex-1 flex-col">
      <PanelHeader title="Table Of Contents" />
      <div className="flex h-[26px] shrink-0 items-center bg-gradient-to-b from-[#fafafa] to-[#efefef] pl-1">
        <Tool name="byDrawing" on />
        {tools("bySource byVis bySel | listOpts")}
      </div>
      <div className="flex min-h-0 flex-1 flex-col border border-[#828790] bg-white pb-0.5">
        <div className="flex min-h-0 flex-1">
          <ul className="min-w-0 flex-1 overflow-hidden pt-0.5">
            <li className="flex h-[18px] items-center pl-2">
              <Expander open />
              <Icon name="layers" className="mr-1 ml-1.5 size-4" />
              <span className="leading-[17px] font-bold">Layers</span>
            </li>
            {layers.map((l) => (
              <LayerRow key={l.name} layer={l} />
            ))}
          </ul>
          <div className="mr-[3px] flex pt-0.5">
            <VScroll thumb="h-[538px]" />
          </div>
        </div>
        <HScroll thumb="w-[215px]" end="mr-[18px]" />
      </div>
    </section>
  );
}

function ArcToolbox() {
  return (
    <section className="flex h-[279px] shrink-0 flex-col">
      <PanelHeader title="ArcToolbox" />
      <div className="flex min-h-0 flex-1 border border-[#828790] bg-white">
        <ul className="min-w-0 flex-1 overflow-hidden pt-px">
          {toolbox.map((t) => {
            const deep = t.deep || t.kind === "tool";
            return (
              <li key={t.name} className={clsx("flex h-[18px] items-center", deep ? "pl-[46px]" : "pl-[27px]")}>
                {t.kind === "set" ? <Expander open={t.open} /> : <span className="w-[9px]" />}
                <Icon name={t.kind === "set" ? "toolset" : "hammer"} className="mr-1 ml-[5px] size-4" />
                <span className={clsx("h-[18px] px-0.5 leading-[17px]", t.selected && "bg-[#f0f0f0]")}>{t.name}</span>
              </li>
            );
          })}
          <li className="pl-[60px]">
            <Icon name="hammer" />
          </li>
        </ul>
        <div className="my-px mr-0.5 flex">
          <VScroll before="h-32" thumb="h-5" />
        </div>
      </div>
    </section>
  );
}

function MapView() {
  return (
    <main className="flex min-w-0 flex-1 flex-col border-t-2 border-l-2 border-[#6f6f6f] bg-white">
      <div className="flex min-h-0 flex-1">
        <div className="flex-1 border-r border-b border-[#e3e3e3]" />
        <div className="flex pl-px">
          <VScroll before="h-[210px]" thumb="h-[53px]" />
        </div>
      </div>
      <div className="flex h-[18px] shrink-0 items-center bg-[#f0f0f0]">
        <button aria-label="Data view" className="flex h-3.5 w-3.5 items-center justify-center bg-[#bfdff7]">
          <Icon name="mapView" className="size-3" />
        </button>
        <button aria-label="Layout view" className="ml-[3px]">
          <Icon name="layoutView" className="size-3" />
        </button>
        <span className="ml-[3px] h-3 w-px bg-[#888]" />
        <button aria-label="Refresh" className="ml-1.5">
          <Icon name="refresh" className="size-3" />
        </button>
        <button aria-label="Pause drawing" className="ml-1">
          <Icon name="pause" className="size-3" />
        </button>
        <span className="ml-3.5">
          <Chevron dir="left" />
        </span>
        <span className="flex-[9]" />
        <span className="h-3.5 w-[51px] bg-[#cdcdcd]" />
        <span className="flex-[7]" />
        <Chevron dir="right" />
        <span className="w-5" />
      </div>
    </main>
  );
}

function SearchPanel() {
  return (
    <aside className="flex w-[304px] shrink-0 flex-col">
      <PanelHeader title="Search" />
      <div className="flex h-7 shrink-0 items-center border-b border-[#c4c4c4] bg-[#f0f0f0] pl-[3px]">
        <button aria-label="Back" className="mr-1.5">
          <Icon name="back" />
        </button>
        <button aria-label="Forward">
          <Icon name="fwd" />
        </button>
        <span className="mx-1.5 h-6 w-px bg-[#888]" />
        <button aria-label="Home" className="mr-2">
          <Icon name="home" />
        </button>
        <button aria-label="Refresh">
          <Icon name="refresh" className="size-3.5" />
        </button>
        <span className="mx-1.5 h-6 w-px bg-[#888]" />
        <button aria-label="Options">
          <Icon name="listOpts" />
        </button>
        <Drop wide />
        <Combo
          label="Search source"
          value="Local Search"
          box="ml-1 mr-px h-[22px] flex-1 border border-[#acacac] bg-[#e1e1e1]"
          select="pl-[3px] pt-0.5 font-['Liberation_Sans',sans-serif] text-[13px]"
        />
      </div>
      <div className="min-h-0 flex-1 bg-white">
        <div className="h-[78px] border-b border-[#c8c8c8] pt-2 pl-[9px] font-['DejaVu_Sans',sans-serif] text-[10px] leading-[14px] text-[#1f62b0]">
          <nav className="mb-1 flex gap-5 pl-px">
            <b className="text-black">ALL</b>
            <a href="#maps" className="underline">Maps</a>
            <a href="#data" className="underline">Data</a>
            <a href="#tools" className="underline">Tools</a>
            <a href="#images" className="underline">Images</a>
          </nav>
          <div className="flex items-center">
            <input aria-label="Search text" className="h-[22px] w-[241px] border border-t-2 border-l-2 border-[#b0b0b0] border-t-[#686868] border-l-[#686868] bg-white px-1 outline-none" />
            <button aria-label="Search" className="ml-2.5 flex size-[21px] items-center justify-center rounded-full border border-[#8db4cf] bg-gradient-to-b from-white to-[#b9e2f7]">
              <Icon name="magnify" className="size-3.5" />
            </button>
          </div>
          <div className="mt-1.5 flex items-center gap-1">
            <a href="#extent" className="underline">Any Extent</a>
            <svg viewBox="0 0 8 5" className="h-[5px] w-2">
              <path d="M0 0h8L4 4.500z" />
            </svg>
          </div>
        </div>
      </div>
      <div className="flex h-[18px] shrink-0 pl-0.5">
        <button className="flex items-center gap-1 rounded-b-sm border border-t-0 border-[#8c8c8c] bg-[#f0f0f0] px-1 text-[#6d6d6d]">
          <Icon name="catalogWin" />
          Catalog
        </button>
        <button className="flex items-center gap-1 rounded-b-sm border border-t-0 border-l-0 border-[#8c8c8c] bg-white px-1">
          <Icon name="searchWin" />
          Search
        </button>
      </div>
    </aside>
  );
}

/* ---------- raster calculator ---------- */

function GroupTitle({ children }: { children: ReactNode }) {
  return (
    <div className="flex h-[23px] items-center gap-1 pl-3 text-[#1f3f94]">
      {children}
      <span className="h-px flex-1 bg-[#b4c2de]" />
    </div>
  );
}

const keyStyle = "flex h-[26px] items-center justify-center border border-[#adadad] bg-[#e1e1e1] font-['DejaVu_Sans',sans-serif] text-[10px]";
const footStyle = "h-[22px] border border-[#adadad] bg-[#e1e1e1]";

function RasterCalculator() {
  const [expression, setExpression] = useState("");
  const [output, setOutput] = useState("\\\\svm-c113.hsr.ch\\m1egger\\Documents\\ArcGIS\\Default.gdb\\rastercalc2");
  const append = (k: string) => setExpression(expression + k);

  return (
    <section
      role="dialog"
      aria-label="Raster Calculator"
      className="absolute top-[169px] left-[574px] flex h-[660px] w-[794px] flex-col border border-[#1c8bd4] bg-[#f0f0f0] font-['Roboto',sans-serif] text-[11px]"
    >
      <header className="flex h-[30px] shrink-0 items-center bg-[#26a4f2] pl-2 font-['Open_Sans',sans-serif]">
        <Icon name="hammer" />
        <h2 className="flex-1 pl-1">Raster Calculator</h2>
        <div className="flex gap-[29px] pr-4">
          <button aria-label="Minimize"><Icon name="min" /></button>
          <button aria-label="Maximize"><Icon name="max" /></button>
          <button aria-label="Close"><Icon name="close" /></button>
        </div>
      </header>

      <div className="flex min-h-0 flex-1 gap-[3px] border-b-2 border-white pl-px">
        <div className="flex w-[584px] border-t border-l border-[#696969]">
          <div className="min-w-0 flex-1 pt-[11px] pr-[13px] pl-1.5">
            <div className="flex h-5 items-center gap-[5px]">
              <span className="size-2 rounded-full border border-[#0a9a1c] bg-[#12e02a]" />
              <span>Map Algebra expression</span>
            </div>
            <div className="pl-[13px]">
              <div className="mt-[9px] flex h-[148px] justify-between">
                <div className="flex w-[186px] flex-col border border-[#828790] bg-white p-0.5 pt-0">
                  <div className="flex min-h-0 flex-1">
                    <div className="min-w-0 flex-1 overflow-hidden">
                      <GroupTitle>Layers and variables</GroupTitle>
                      <ul>
                        {variables.map((v) => (
                          <li key={v} className="flex h-[18px] items-center pl-[3px] whitespace-nowrap">
                            <Icon name="diamond" className="mr-0.5 size-[15px]" />
                            {v}
                          </li>
                        ))}
                      </ul>
                    </div>
                    <div className="flex pt-0.5">
                      <VScroll thumb="h-9" />
                    </div>
                  </div>
                  <HScroll thumb="w-[121px]" end="mr-[15px]" />
                </div>

                <div className="flex items-end gap-2 pb-px">
                  <div className="grid grid-cols-[27px_27px_27px] gap-x-[3px] gap-y-[5px]">
                    {digits.map((k) => (
                      <button key={k} onClick={() => append(k)} className={clsx(keyStyle, k === "0" && "col-span-2")}>
                        {k}
                      </button>
                    ))}
                  </div>
                  <div className="grid grid-cols-[27px_27px_27px_27px] gap-x-[3px] gap-y-[5px]">
                    {operators.map((k) => (
                      <button key={k} onClick={() => append(k)} className={keyStyle}>
                        {k}
                      </button>
                    ))}
                  </div>
                </div>

                <div className="flex w-[125px] border border-[#828790] bg-white p-0.5 pt-0">
                  <div className="min-w-0 flex-1 overflow-hidden pr-2.5">
                    <GroupTitle>Conditional</GroupTitle>
                    <ul className="pb-px pl-[5px] leading-[18px]">
                      <li>Con</li>
                      <li>Pick</li>
                      <li>SetNull</li>
                    </ul>
                    <GroupTitle>Math</GroupTitle>
                    <ul className="pl-[5px] leading-[18px]">
                      <li>Abs</li>
                      <li>Exp</li>
                      <li>Exp10</li>
                    </ul>
                  </div>
                  <div className="flex pt-0.5">
                    <VScroll thumb="h-[21px]" />
                  </div>
                </div>
              </div>

              <textarea
                aria-label="Map Algebra expression"
                value={expression}
                onChange={(e) => setExpression(e.target.value)}
                className="mt-[15px] block h-[39px] w-full resize-none border border-[#7a7a7a] bg-white px-1 outline-none"
              />
              <label htmlFor="output" className="mt-3.5 block h-3.5 leading-[14px]">
                Output raster
              </label>
              <div className="flex items-center justify-between">
                <input
                  id="output"
                  value={output}
                  onChange={(e) => setOutput(e.target.value)}
                  className="h-5 w-[502px] border border-[#7a7a7a] bg-white px-[5px] outline-none"
                />
                <button aria-label="Browse" className="flex h-6 w-[22px] items-center justify-center border-2 border-[#0f74c8] bg-[#e1e1e1]">
                  <Icon name="folder" />
                </button>
              </div>
            </div>
          </div>
          <VScroll light />
        </div>

        <div className="flex flex-1 border-t border-l-2 border-[#696969] bg-white font-['Liberation_Sans',sans-serif]">
          <div className="flex-1 pt-2 pl-[15px]">
            <h3 className="text-[16px] leading-5 font-bold whitespace-nowrap">Raster Calculator</h3>
            <p className="mt-5 w-[160px] text-[13px] leading-4">
              Builds and executes a single Map Algebra expression using Python syntax in a calculator-like interface.
            </p>
          </div>
          <div className="mr-0.5 flex">
            <VScroll light />
          </div>
        </div>
      </div>

      <footer className="flex h-11 shrink-0 items-center gap-[7px] pl-[227px]">
        <button className="h-[22px] w-[73px] border-2 border-[#0078d7] bg-[#e1e1e1]">OK</button>
        <button className={clsx(footStyle, "w-[73px]")}>Cancel</button>
        <button className={clsx(footStyle, "w-[88px]")}>Environments...</button>
        <button className={clsx(footStyle, "w-24")}>&lt;&lt; Hide Help</button>
        <button className={clsx(footStyle, "ml-4 w-[100px]")}>Tool Help</button>
      </footer>
    </section>
  );
}

function Task({ icon, label, active }: { icon: string; label: string; active?: boolean }) {
  return (
    <button
      className={clsx(
        "flex h-10 items-center gap-1 border-b-2 border-[#99d3f9] text-left",
        active ? "w-40 bg-[#195e8c] pl-2.5" : "w-[152px] pl-1.5"
      )}
    >
      <Icon name={icon} className="size-6" />
      <span className="truncate pt-0.5">{label}</span>
    </button>
  );
}

export default function App() {
  return (
    <div className="relative flex h-screen flex-col overflow-hidden bg-[#f5f5f5] font-['Open_Sans',sans-serif] text-[11px] text-black">
      <header className="flex h-[23px] shrink-0 items-center bg-white pl-0.5 text-[#8e8e8e]">
        <Icon name="arcmap" />
        <h1 className="flex-1 pl-[5px]">StadionEvaluationZH.mxd - ArcMap</h1>
        <div className="flex gap-[29px] pr-[17px] pb-0.5">
          <button aria-label="Minimize"><Icon name="min" /></button>
          <button aria-label="Restore"><Icon name="restore" /></button>
          <button aria-label="Close"><Icon name="close" /></button>
        </div>
      </header>
      <nav className="flex h-[25px] shrink-0 items-center gap-[17px] bg-[#f1f1f1] pt-px pl-3">
        {menus.map((m) => (
          <button key={m}>{m}</button>
        ))}
      </nav>
      <Toolbars />

      <div className="flex min-h-0 flex-1">
        <div className="flex w-[301px] shrink-0 flex-col gap-[5px] pb-0.5">
          <TableOfContents />
          <ArcToolbox />
        </div>
        <span className="w-1 shrink-0" />
        <div className="flex min-w-0 flex-1 pb-1">
          <MapView />
          <span className="w-1.5 shrink-0 border-l border-[#e3e3e3]" />
          <SearchPanel />
          <div className="w-[22px] shrink-0 pt-0.5 pl-0.5">
            <button className="flex h-[117px] w-5 flex-col items-center gap-1 rounded-l-sm border border-r-0 border-[#8c8c8c] bg-[#f3f3f3] pt-1 text-[#666]">
              <Icon name="create" className="size-3.5" />
              <span className="font-['Liberation_Sans',sans-serif] text-[12px] leading-4 whitespace-nowrap [writing-mode:vertical-rl]">Create Features</span>
            </button>
          </div>
        </div>
      </div>

      <div className="flex h-[18px] shrink-0 items-center justify-between bg-[#f0f0f0] pr-[100px] pl-[3px] whitespace-pre">
        <span>Geoprocessing tool for performing raster analysis using a Map Algebra expression.</span>
        <span>674984.475  242686.61 Meters</span>
      </div>

      <footer className="flex h-10 shrink-0 items-center bg-[#002b47] text-white">
        <button aria-label="Start" className="w-12 pl-4"><Icon name="windows" /></button>
        <button aria-label="Search" className="w-12 pl-4"><Icon name="find" /></button>
        <button aria-label="Task view" className="w-[55px] pl-3.5"><Icon name="taskview" className="size-5" /></button>
        <Task icon="edge" label="Team 23 2017 – GIS..." />
        <span className="w-[9px]" />
        <Task icon="arcmap" label="StadionEvaluationZ..." />
        <span className="w-1" />
        <Task icon="hammer" label="Raster Calculator" active />
        <div className="ml-auto flex h-full items-center">
          <Icon name="tray" className="size-3.5" />
          <Icon name="net" className="mx-2 size-4" />
          <Icon name="sound" className="size-4" />
          <span className="ml-3">DEU</span>
          <time className="mr-1.5 ml-3 text-center leading-[18px]">
            14:57
            <br />
            20.12.2017
          </time>
          <span className="mr-1 h-full w-px bg-[#5b7789]" />
        </div>
      </footer>

      <RasterCalculator />
    </div>
  );
}
